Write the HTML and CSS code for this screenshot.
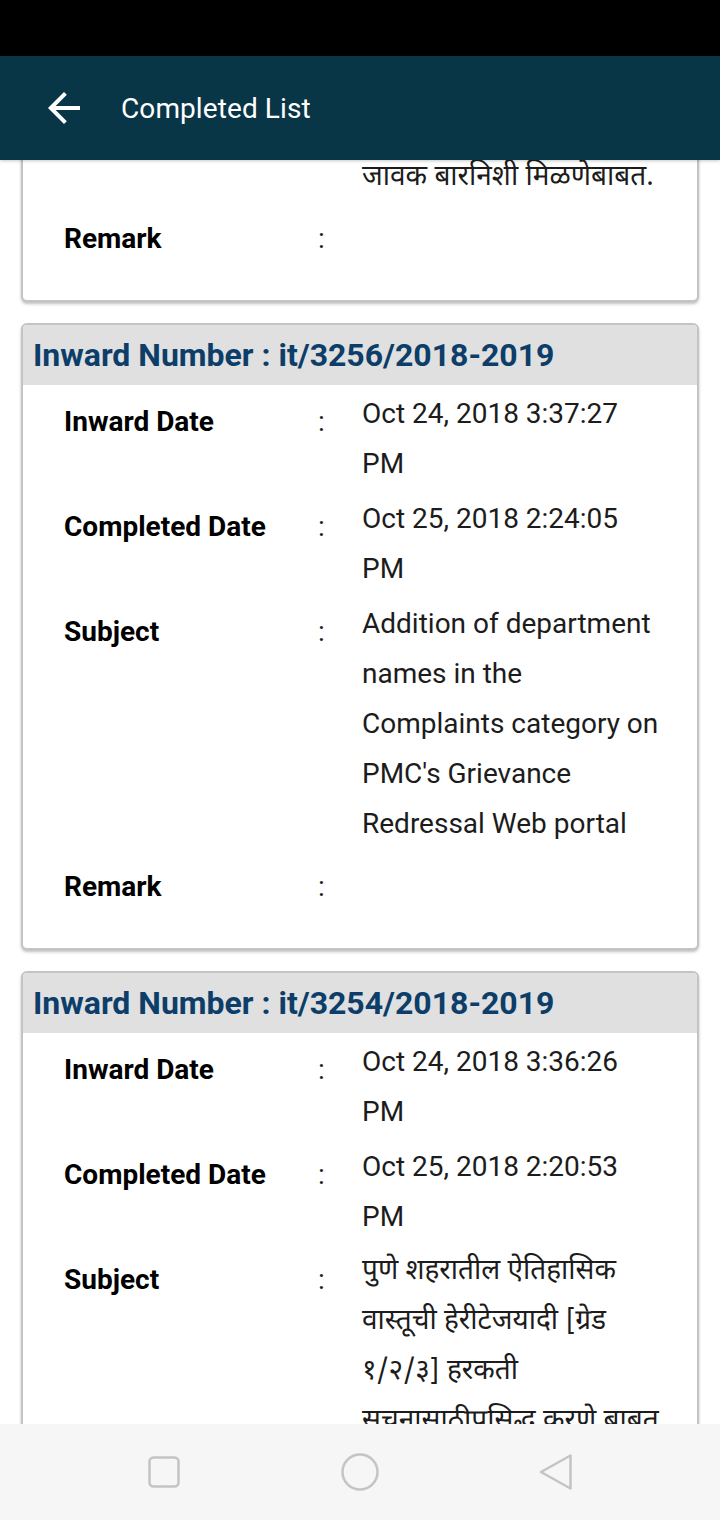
FILE: index.html
```html
<!DOCTYPE html>
<html lang="en">
<head>
<meta charset="utf-8">
<title>Completed List</title>
<link rel="stylesheet" href="styles.css">
</head>
<body>
<div class="screen">
  <div class="statusbar"></div>
  <header class="appbar">
    <svg class="back" viewBox="0 0 24 24" width="48" height="48" aria-hidden="true">
      <path d="M20 11H7.83l5.59-5.59L12 4l-8 8 8 8 1.41-1.41L7.83 13H20v-2z" fill="#fff"/>
    </svg>
    <h1 class="title">Completed List</h1>
  </header>
  <main class="list">
    <section class="card card-partial">
      <div class="card-body">
        <div class="row">
          <div class="label"></div>
          <div class="colon"></div>
          <div class="value deva value-tail">जावक बारनिशी मिळणेबाबत.</div>
        </div>
        <div class="row">
          <div class="label">Remark</div>
          <div class="colon">:</div>
          <div class="value"></div>
        </div>
      </div>
    </section>

    <section class="card">
      <h2 class="card-head">Inward Number : it/3256/2018-2019</h2>
      <div class="card-body">
        <div class="row">
          <div class="label">Inward Date</div>
          <div class="colon">:</div>
          <div class="value">Oct 24, 2018 3:37:27<br>PM</div>
        </div>
        <div class="row">
          <div class="label">Completed Date</div>
          <div class="colon">:</div>
          <div class="value">Oct 25, 2018 2:24:05<br>PM</div>
        </div>
        <div class="row">
          <div class="label">Subject</div>
          <div class="colon">:</div>
          <div class="value">Addition of department<br>names in the<br>Complaints category on<br>PMC's Grievance<br>Redressal Web portal</div>
        </div>
        <div class="row">
          <div class="label">Remark</div>
          <div class="colon">:</div>
          <div class="value"></div>
        </div>
      </div>
    </section>

    <section class="card">
      <h2 class="card-head">Inward Number : it/3254/2018-2019</h2>
      <div class="card-body">
        <div class="row">
          <div class="label">Inward Date</div>
          <div class="colon">:</div>
          <div class="value">Oct 24, 2018 3:36:26<br>PM</div>
        </div>
        <div class="row">
          <div class="label">Completed Date</div>
          <div class="colon">:</div>
          <div class="value">Oct 25, 2018 2:20:53<br>PM</div>
        </div>
        <div class="row">
          <div class="label">Subject</div>
          <div class="colon">:</div>
          <div class="value deva">पुणे शहरातील ऐतिहासिक<br>वास्तूची हेरीटेजयादी [ग्रेड<br>१/२/३] हरकती<br>सूचनासाठीप्रसिद्ध करणे बाबत</div>
        </div>
        <div class="row">
          <div class="label">Remark</div>
          <div class="colon">:</div>
          <div class="value"></div>
        </div>
      </div>
    </section>
  </main>
  <nav class="navbar">
    <svg class="nav-icon" viewBox="0 0 40 40" width="40" height="40" aria-hidden="true">
      <rect x="5.5" y="5.5" width="29" height="29" rx="4" fill="none" stroke="#c4c4c4" stroke-width="2.5"/>
    </svg>
    <svg class="nav-icon" viewBox="0 0 40 40" width="40" height="40" aria-hidden="true">
      <ellipse cx="20" cy="20" rx="17.5" ry="17.5" fill="none" stroke="#c4c4c4" stroke-width="2.5"/>
    </svg>
    <svg class="nav-icon" viewBox="0 0 40 40" width="40" height="40" aria-hidden="true">
      <path d="M34.5 3.5 L34.5 36.5 L5 20 Z" fill="none" stroke="#c4c4c4" stroke-width="2.5" stroke-linejoin="round"/>
    </svg>
  </nav>
</div>
</body>
</html>
```

FILE: styles.css
```css
* { box-sizing: border-box; }

html, body {
  margin: 0;
  padding: 0;
  background: #ffffff;
}

body {
  font-family: Roboto, "Noto Sans", "Noto Sans Devanagari", "Lohit Devanagari", sans-serif;
  color: #000;
}

.screen {
  width: 720px;
  height: 1520px;
  display: flex;
  flex-direction: column;
  overflow: hidden;
}

.statusbar {
  height: 56px;
  flex: none;
  background: #000;
}

.appbar {
  height: 104px;
  flex: none;
  background: #093647;
  display: flex;
  align-items: center;
  padding-left: 40px;
  position: relative;
  z-index: 2;
  box-shadow: 0 1px 3px rgba(0, 0, 0, 0.22);
}

.back {
  display: block;
  flex: none;
}

.title {
  margin: 0 0 0 33px;
  font-weight: 400;
  font-size: 28px;
  color: #ffffff;
  letter-spacing: 0.1px;
}

.list {
  flex: 1;
  min-height: 0;
  overflow: hidden;
  display: flex;
  flex-direction: column;
  gap: 21px;
  padding: 0 21px;
}

.card {
  flex: none;
  border: 2px solid #c4c4c4;
  border-radius: 6px;
  background: #fff;
  box-shadow: 0 2px 3px rgba(0, 0, 0, 0.25);
  overflow: hidden;
}

.card-partial {
  margin-top: -11px;
  border-top: none;
  border-radius: 0 0 6px 6px;
}

.card-head {
  margin: 0;
  height: 60px;
  line-height: 60px;
  background: #e0e0e0;
  padding-left: 10px;
  font-size: 32px;
  font-weight: 700;
  color: #0d3e6a;
  white-space: nowrap;
}

.card-body {
  padding: 4px 0 36px 41px;
  display: flex;
  flex-direction: column;
  gap: 5px;
}

.card-partial .card-body {
  padding-top: 2px;
}

.row {
  display: grid;
  grid-template-columns: 254px 44px 1fr;
  align-items: start;
}

.label,
.colon {
  padding-top: 8px;
  line-height: 50px;
  font-size: 28px;
}

.label {
  font-weight: 700;
  color: #000;
}

.colon {
  color: #222;
}

.value {
  font-size: 28px;
  line-height: 50px;
  color: #1c1c1c;
  white-space: nowrap;
}

.value-tail {
  padding-top: 5px;
  line-height: 45px;
}

.deva {
  font-family: "Noto Sans Devanagari", "Lohit Devanagari", "Mukta", "Noto Sans", Roboto, sans-serif;
}

.navbar {
  height: 96px;
  flex: none;
  background: #f6f6f6;
  display: flex;
  align-items: center;
  justify-content: center;
  gap: 156px;
  position: relative;
  z-index: 2;
}

.nav-icon {
  display: block;
  flex: none;
}
```
